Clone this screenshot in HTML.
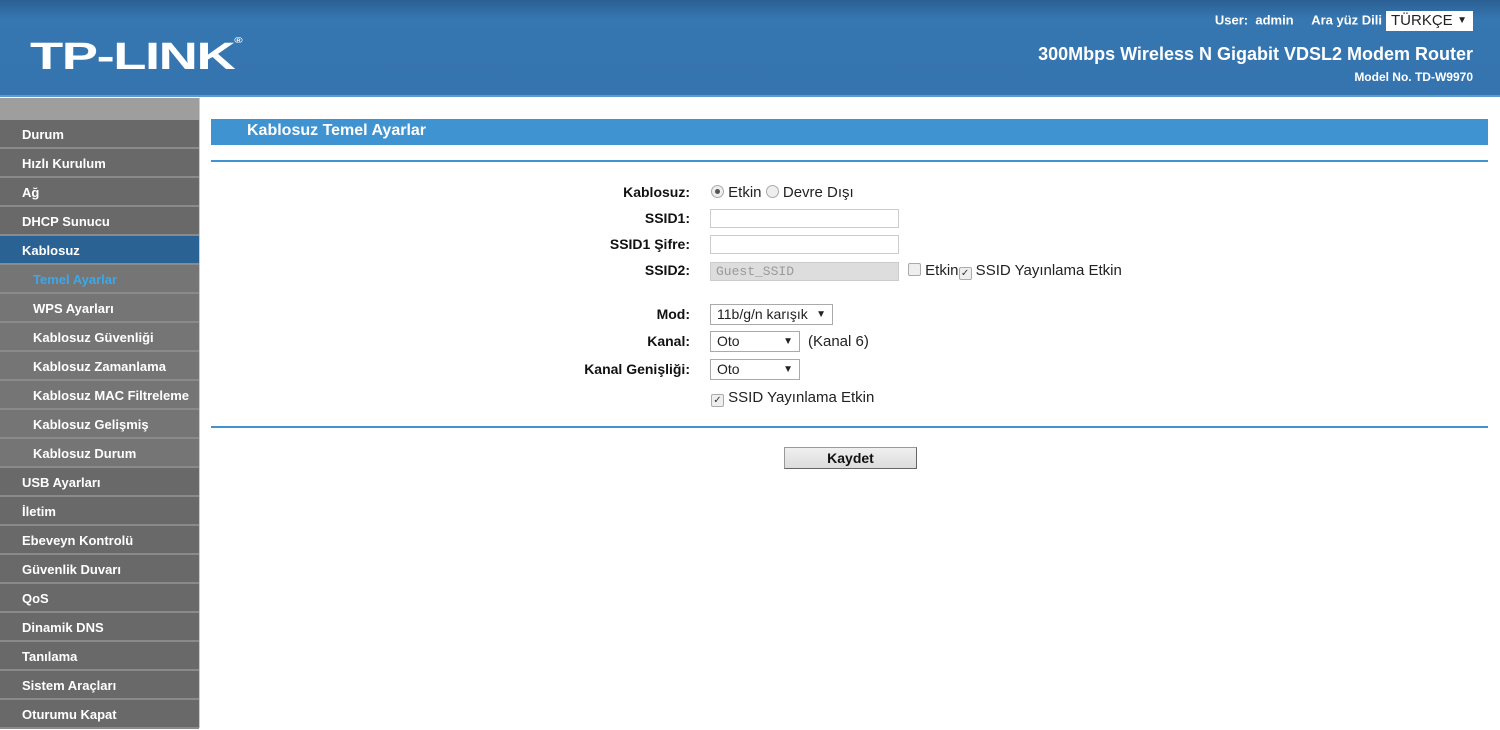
<!DOCTYPE html>
<html><head><meta charset="utf-8"><style>
*{margin:0;padding:0;box-sizing:border-box}
body{width:1500px;height:728px;overflow:hidden;background:#fff;font-family:"Liberation Sans",Arial,sans-serif;position:relative}
#hd{position:absolute;left:0;top:0;width:1500px;height:97px;background:linear-gradient(180deg,#2a5f93 0%,#3677b1 20%,#3574ae 100%);border-bottom:2px solid #5a9bd0}
#logo{position:absolute;left:30px;top:36px;color:#fff;font-weight:bold;font-size:38px;letter-spacing:-1px;transform:scaleX(1.43);transform-origin:left}
#logo sup{font-size:8px;vertical-align:top}
.hr{position:absolute;right:27px;color:#fff;font-weight:bold;text-align:right}
#sel{display:inline-block;background:#fff;color:#222;font-weight:normal;font-size:15px;width:87px;height:20px;line-height:20px;padding-left:5px;text-align:left;vertical-align:middle;margin-left:4px}
#sb{position:absolute;left:0;top:98px;width:200px;height:630px;background:#6b6b6b;border-right:1px solid #ccc}
#sb .top{height:22px;background:#9e9e9e}
#sb div.i{height:29px;line-height:30px;border-bottom:2px solid #8a8a8a;color:#fff;font-weight:bold;font-size:13px;padding-left:22px;background:#696969}
#sb div.s{padding-left:33px;background:#757575}
#sb div.a{background:#2a6294}
#sb div.t{color:#3aa8ea}
#tb{position:absolute;left:211px;top:119px;width:1277px;height:26px;background:#3f93d1;color:#fff;font-weight:bold;font-size:16px;padding-left:36px;line-height:24px}
.ln{position:absolute;left:211px;width:1277px;height:2px;background:#3f93d1}
.lb{position:absolute;right:810px;font-weight:bold;font-size:14px;color:#111;text-align:right}
.tx{position:absolute;font-size:15px;color:#222}
.in{position:absolute;left:710px;width:189px;height:19px;border:1px solid #ccc;background:#fff}
.dd{position:absolute;left:710px;height:21px;border:1px solid #aaa;background:#fff;font-size:14px;line-height:19px;padding-left:6px;color:#222}
.dd b{position:absolute;right:6px;font-size:10px}
.rad{display:inline-block;width:13px;height:13px;border:1px solid #aaa;border-radius:50%;background:#eee;vertical-align:-1px;position:relative}
.cb{display:inline-block;width:13px;height:13px;border:1px solid #aaa;border-radius:2px;background:#eee;vertical-align:-1px;font-size:10px;line-height:11px;text-align:center;color:#333}
</style></head><body>
<div id="hd">
<div id="logo">TP-LINK<sup>®</sup></div>
<div class="hr" style="top:11px;font-size:13px">User:&nbsp; admin &nbsp;&nbsp;&nbsp; Ara yüz Dili<span id="sel">TÜRKÇE <span style="float:right;margin-right:6px;font-size:10px">▼</span></span></div>
<div class="hr" style="top:44px;font-size:18px">300Mbps Wireless N Gigabit VDSL2 Modem Router</div>
<div class="hr" style="top:70px;font-size:12px">Model No. TD-W9970</div>
</div>
<div id="sb"><div class="top"></div>
<div class="i">Durum</div><div class="i">Hızlı Kurulum</div><div class="i">Ağ</div><div class="i">DHCP Sunucu</div><div class="i a">Kablosuz</div>
<div class="i s t">Temel Ayarlar</div><div class="i s">WPS Ayarları</div><div class="i s">Kablosuz Güvenliği</div><div class="i s">Kablosuz Zamanlama</div><div class="i s">Kablosuz MAC Filtreleme</div><div class="i s">Kablosuz Gelişmiş</div><div class="i s">Kablosuz Durum</div>
<div class="i">USB Ayarları</div><div class="i">İletim</div><div class="i">Ebeveyn Kontrolü</div><div class="i">Güvenlik Duvarı</div><div class="i">QoS</div><div class="i">Dinamik DNS</div><div class="i">Tanılama</div><div class="i">Sistem Araçları</div><div class="i">Oturumu Kapat</div>
</div>
<div id="tb">Kablosuz Temel Ayarlar</div>
<div class="ln" style="top:160px"></div>
<div class="ln" style="top:426px"></div>
<div class="lb" style="top:184px">Kablosuz:</div>
<div class="tx" style="left:711px;top:184px"><span class="rad"><span style="position:absolute;left:3px;top:3px;width:5px;height:5px;border-radius:50%;background:#555"></span></span> Etkin <span class="rad"></span> Devre Dışı</div>
<div class="lb" style="top:210px">SSID1:</div><div class="in" style="top:209px"></div>
<div class="lb" style="top:236px">SSID1 Şifre:</div><div class="in" style="top:235px"></div>
<div class="lb" style="top:262px">SSID2:</div>
<div class="in" style="top:262px;background:#ddd;font-family:'Liberation Mono',monospace;font-size:13px;color:#999;padding-left:5px;line-height:17px">Guest_SSID</div>
<div class="tx" style="left:908px;top:262px"><span class="cb"></span> Etkin<span class="cb">✓</span> SSID Yayınlama Etkin</div>
<div class="lb" style="top:306px">Mod:</div><div class="dd" style="top:304px;width:123px">11b/g/n karışık<b>▼</b></div>
<div class="lb" style="top:333px">Kanal:</div><div class="dd" style="top:331px;width:90px">Oto<b>▼</b></div>
<div class="tx" style="left:808px;top:333px">(Kanal 6)</div>
<div class="lb" style="top:361px">Kanal Genişliği:</div><div class="dd" style="top:359px;width:90px">Oto<b>▼</b></div>
<div class="tx" style="left:711px;top:389px"><span class="cb">✓</span> SSID Yayınlama Etkin</div>
<div style="position:absolute;left:784px;top:447px;width:133px;height:22px;background:linear-gradient(#f0f0f0,#dcdcdc);border:1px solid #999;border-right-color:#666;border-bottom-color:#666;font-weight:bold;font-size:14px;text-align:center;line-height:20px;color:#111">Kaydet</div>
</body></html>
